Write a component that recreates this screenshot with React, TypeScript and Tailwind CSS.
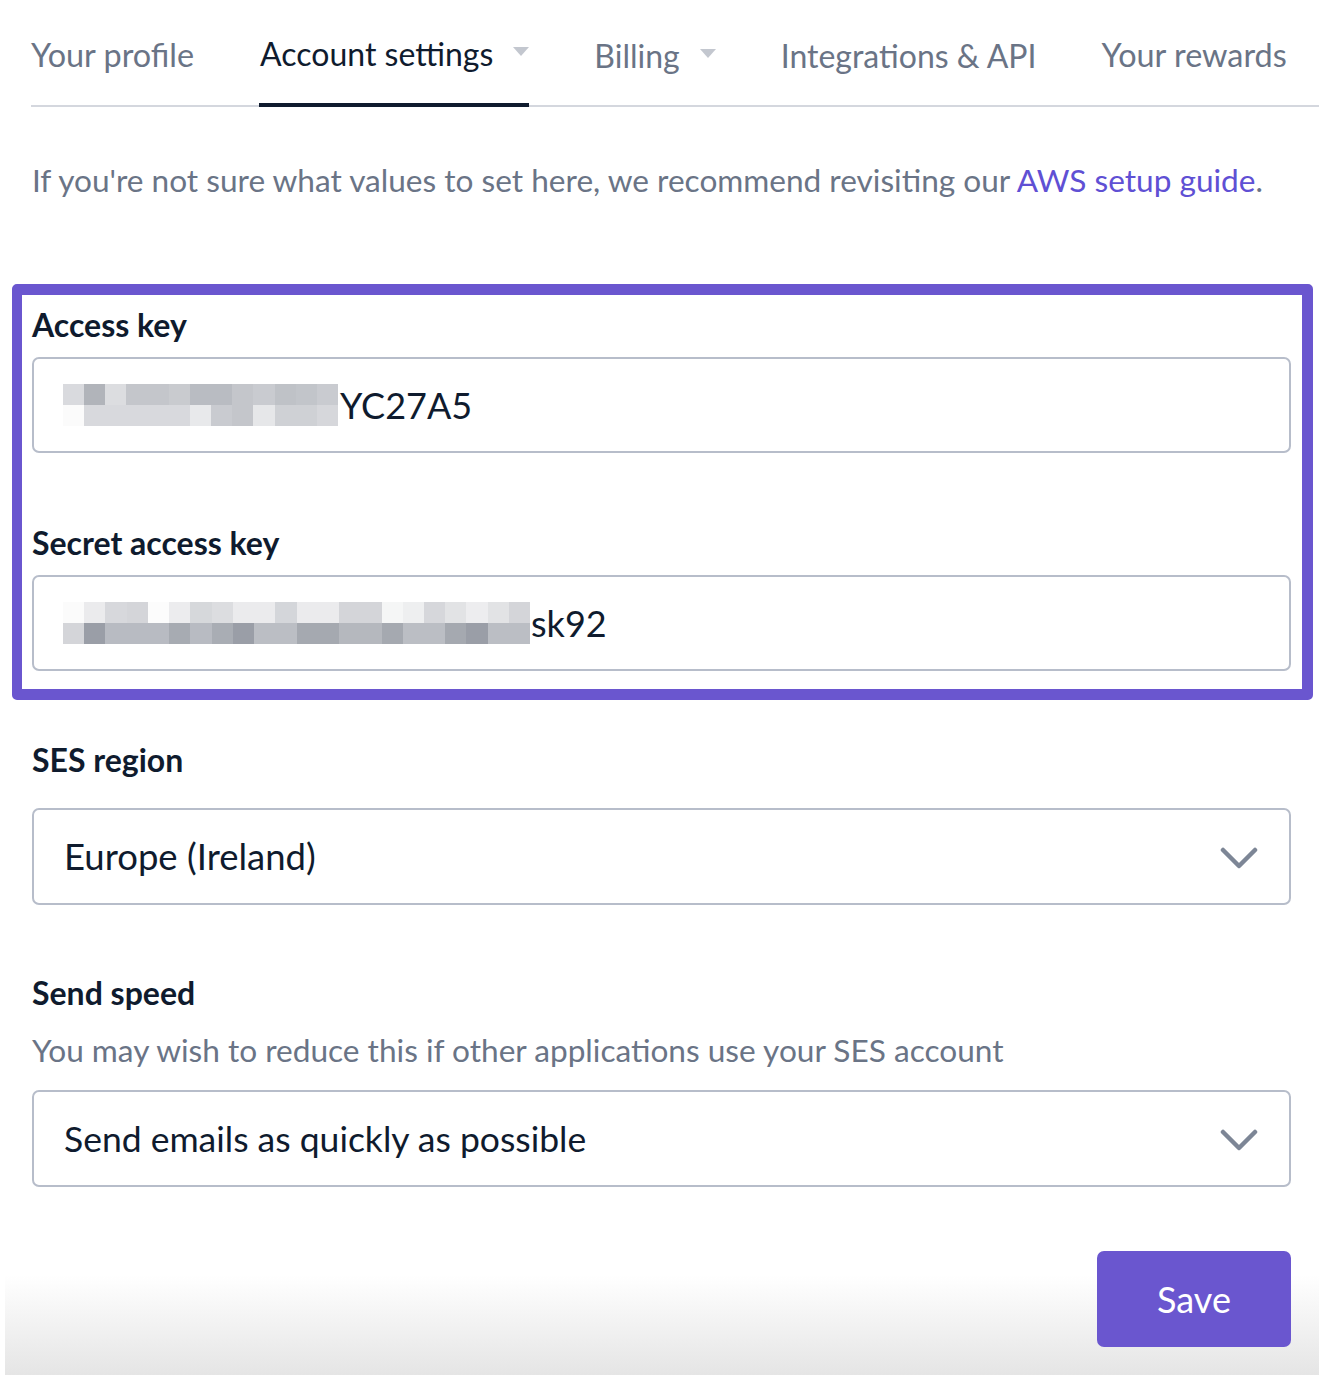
import React from "react";

const accessTop = ["bg-[#d9dade]","bg-[#b1b4ba]","bg-[#dcdde0]","bg-[#c4c6cb]","bg-[#c4c6cb]","bg-[#c9cbcf]","bg-[#b9bcc2]","bg-[#b9bcc2]","bg-[#c4c6cb]","bg-[#c9cbd0]","bg-[#bfc2c7]","bg-[#c2c5ca]","bg-[#c9cbd0]"];
const accessBottom = ["bg-[#fbfbfb]","bg-[#d8d9dd]","bg-[#d8d9dd]","bg-[#d8d9dd]","bg-[#d8d9dd]","bg-[#d8d9dd]","bg-[#e8e9eb]","bg-[#c9cbd0]","bg-[#c4c6cb]","bg-[#e6e7e9]","bg-[#cfd1d5]","bg-[#cfd1d5]","bg-[#d6d7db]"];
const secretTop = ["bg-[#fbfbfb]","bg-[#ebebed]","bg-[#d7d8dc]","bg-[#d4d5d9]","bg-[#fcfcfc]","bg-[#ececee]","bg-[#d6d8db]","bg-[#dcdde0]","bg-[#ebebed]","bg-[#ebebed]","bg-[#d4d6da]","bg-[#ebebed]","bg-[#ebebed]","bg-[#d4d5d9]","bg-[#d4d5d9]","bg-[#f5f6f6]","bg-[#eeeff0]","bg-[#d6d7db]","bg-[#e2e3e5]","bg-[#ededef]","bg-[#e2e3e5]","bg-[#d4d5d9]"];
const secretBottom = ["bg-[#d4d5d9]","bg-[#9a9ea7]","bg-[#b8bbc2]","bg-[#b8bbc2]","bg-[#b8bbc2]","bg-[#a7abb2]","bg-[#b8bbc2]","bg-[#a9adb4]","bg-[#9a9ea7]","bg-[#bbbec4]","bg-[#bbbec4]","bg-[#a5a9b0]","bg-[#a5a9b0]","bg-[#b5b8be]","bg-[#b5b8be]","bg-[#a5a9b0]","bg-[#bbbec4]","bg-[#bbbec4]","bg-[#a5a9b0]","bg-[#9a9ea7]","bg-[#bbbec4]","bg-[#bbbec4]"];

function Pixels({ top, bottom, width }: { top: string[]; bottom: string[]; width: string }) {
  return (
    <div className={`flex flex-col ${width}`}>
      <div className="flex h-[21px]">
        {top.map((c, i) => (
          <div key={i} className={`flex-1 ${c}`} />
        ))}
      </div>
      <div className="flex h-[21px]">
        {bottom.map((c, i) => (
          <div key={i} className={`flex-1 ${c}`} />
        ))}
      </div>
    </div>
  );
}

function Caret() {
  return (
    <svg width="16" height="9" viewBox="0 0 16 9" className="ml-[20px] mb-[4px]">
      <path d="M0 0 L16 0 L8 9 Z" fill="#c3c7cf" />
    </svg>
  );
}

function Chevron() {
  return (
    <svg width="38" height="24" viewBox="0 0 38 24" fill="none" className="mt-[4px]">
      <path d="M3 3 L19 19 L35 3" stroke="#7d8696" strokeWidth="4.5" strokeLinecap="round" strokeLinejoin="round" />
    </svg>
  );
}

export default function App() {
  return (
    <div
      className="relative w-[1323px] h-[1375px] bg-white overflow-hidden text-[#0f1b2e]"
      style={{ fontFamily: "Lato, 'Open Sans', sans-serif" }}
    >
      <div className="absolute left-[5px] right-[4px] bottom-0 h-[100px] bg-gradient-to-b from-white to-[#e5e5e5]" />
      <div className="relative pl-[31px] pr-[4px]">
        <nav className="flex items-end gap-[65px] border-b-2 border-[#d4d7de] h-[107px]">
          <div className="h-full flex items-center pt-[2px] text-[32.4px] text-[#6a7486] -mb-[2px]">Your profile</div>
          <div className="h-full flex items-center pt-[2px] text-[32px] text-[#0f1b2e] border-b-4 border-[#0f1b2e] -mb-[2px] pl-[1px]">
            <span>Account settings</span>
            <Caret />
          </div>
          <div className="h-full flex items-center pt-[2px] text-[32px] text-[#6a7486] -mb-[2px]">
            <span>Billing</span>
            <Caret />
          </div>
          <div className="h-full flex items-center pt-[2px] text-[32px] text-[#6a7486] -mb-[2px]">Integrations &amp; API</div>
          <div className="h-full flex items-center pt-[2px] text-[32.4px] text-[#6a7486] -mb-[2px]">Your rewards</div>
        </nav>
      </div>

      <div className="relative px-[32px]">
        <p className="mt-[55px] text-[31.6px] leading-[36px] text-[#6a7486]">
          If you're not sure what values to set here, we recommend revisiting our{" "}
          <span className="text-[#5f50d4]">AWS setup guide</span>.
        </p>

        <div className="mt-[86px] -ml-[20px] -mr-[22px] border-[11px] border-l-[10px] border-[#6a56cf] rounded-[5px] pl-[10px] pr-[11px] pt-[12px] pb-[18px]">
          <div className="text-[32px] leading-[36px] font-bold">Access key</div>
          <div className="mt-[14px] h-[96px] border-2 border-[#b7bdca] rounded-[7px] flex items-center pl-[29px]">
            <Pixels top={accessTop} bottom={accessBottom} width="w-[275px]" />
            <span className="ml-[2px] text-[36px]">YC27A5</span>
          </div>

          <div className="mt-[72px] text-[32px] leading-[36px] font-bold">Secret access key</div>
          <div className="mt-[14px] h-[96px] border-2 border-[#b7bdca] rounded-[7px] flex items-center pl-[29px]">
            <Pixels top={secretTop} bottom={secretBottom} width="w-[467px]" />
            <span className="ml-[1px] text-[36px]">sk92</span>
          </div>
        </div>

        <div className="mt-[42px] text-[32px] leading-[36px] font-bold">SES region</div>
        <div className="mt-[30px] h-[97px] border-2 border-[#b7bdca] rounded-[7px] flex items-center justify-between pl-[30px] pr-[31px]">
          <span className="text-[36.5px]">Europe (Ireland)</span>
          <Chevron />
        </div>

        <div className="mt-[70px] text-[32px] leading-[36px] font-bold">Send speed</div>
        <div className="mt-[21px] text-[31.6px] leading-[36px] text-[#6a7486]">
          You may wish to reduce this if other applications use your SES account
        </div>
        <div className="mt-[22px] h-[97px] border-2 border-[#b7bdca] rounded-[7px] flex items-center justify-between pl-[30px] pr-[31px]">
          <span className="text-[35.5px]">Send emails as quickly as possible</span>
          <Chevron />
        </div>

        <div className="mt-[64px] flex justify-end">
          <button className="w-[194px] h-[96px] rounded-[7px] bg-[#6a56cf] text-white text-[36px]">Save</button>
        </div>
      </div>
    </div>
  );
}
